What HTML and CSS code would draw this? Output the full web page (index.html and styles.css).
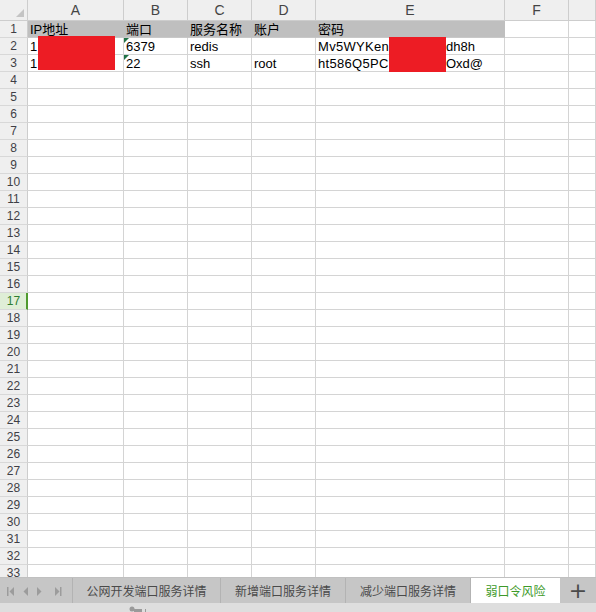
FILE: index.html
```html
<!DOCTYPE html>
<html lang="zh">
<head>
<meta charset="utf-8">
<link rel="stylesheet" href="styles.css">
</head>
<body>
<div class="app">
  <div class="sheet">
    <div class="row head">
      <div class="rh corner"><span class="tri"></span></div>
      <div class="c a">A</div><div class="c b">B</div><div class="c cc">C</div><div class="c d">D</div><div class="c e">E</div><div class="c f">F</div><div class="c g"></div>
    </div>
    <div class="row r1">
      <div class="rh">1</div>
      <div class="c a gray">IP地址</div><div class="c b gray">端口</div><div class="c cc gray">服务名称</div><div class="c d gray">账户</div><div class="c e gray">密码</div><div class="c f"></div><div class="c g"></div>
    </div>
    <div class="row">
      <div class="rh">2</div>
      <div class="c a">1</div><div class="c b flag">6379</div><div class="c cc">redis</div><div class="c d"></div><div class="c e"><span class="lead">Mv5WYKenc</span><span>dh8h</span></div><div class="c f"></div><div class="c g"></div>
    </div>
    <div class="row">
      <div class="rh">3</div>
      <div class="c a">1</div><div class="c b flag">22</div><div class="c cc">ssh</div><div class="c d">root</div><div class="c e"><span class="lead">ht586Q5PCB</span><span>Oxd@</span></div><div class="c f"></div><div class="c g"></div>
    </div>
    <div class="row"><div class="rh">4</div><div class="c a"></div><div class="c b"></div><div class="c cc"></div><div class="c d"></div><div class="c e"></div><div class="c f"></div><div class="c g"></div></div>
    <div class="row"><div class="rh">5</div><div class="c a"></div><div class="c b"></div><div class="c cc"></div><div class="c d"></div><div class="c e"></div><div class="c f"></div><div class="c g"></div></div>
    <div class="row"><div class="rh">6</div><div class="c a"></div><div class="c b"></div><div class="c cc"></div><div class="c d"></div><div class="c e"></div><div class="c f"></div><div class="c g"></div></div>
    <div class="row"><div class="rh">7</div><div class="c a"></div><div class="c b"></div><div class="c cc"></div><div class="c d"></div><div class="c e"></div><div class="c f"></div><div class="c g"></div></div>
    <div class="row"><div class="rh">8</div><div class="c a"></div><div class="c b"></div><div class="c cc"></div><div class="c d"></div><div class="c e"></div><div class="c f"></div><div class="c g"></div></div>
    <div class="row"><div class="rh">9</div><div class="c a"></div><div class="c b"></div><div class="c cc"></div><div class="c d"></div><div class="c e"></div><div class="c f"></div><div class="c g"></div></div>
    <div class="row"><div class="rh">10</div><div class="c a"></div><div class="c b"></div><div class="c cc"></div><div class="c d"></div><div class="c e"></div><div class="c f"></div><div class="c g"></div></div>
    <div class="row"><div class="rh">11</div><div class="c a"></div><div class="c b"></div><div class="c cc"></div><div class="c d"></div><div class="c e"></div><div class="c f"></div><div class="c g"></div></div>
    <div class="row"><div class="rh">12</div><div class="c a"></div><div class="c b"></div><div class="c cc"></div><div class="c d"></div><div class="c e"></div><div class="c f"></div><div class="c g"></div></div>
    <div class="row"><div class="rh">13</div><div class="c a"></div><div class="c b"></div><div class="c cc"></div><div class="c d"></div><div class="c e"></div><div class="c f"></div><div class="c g"></div></div>
    <div class="row"><div class="rh">14</div><div class="c a"></div><div class="c b"></div><div class="c cc"></div><div class="c d"></div><div class="c e"></div><div class="c f"></div><div class="c g"></div></div>
    <div class="row"><div class="rh">15</div><div class="c a"></div><div class="c b"></div><div class="c cc"></div><div class="c d"></div><div class="c e"></div><div class="c f"></div><div class="c g"></div></div>
    <div class="row"><div class="rh">16</div><div class="c a"></div><div class="c b"></div><div class="c cc"></div><div class="c d"></div><div class="c e"></div><div class="c f"></div><div class="c g"></div></div>
    <div class="row"><div class="rh sel">17</div><div class="c a"></div><div class="c b"></div><div class="c cc"></div><div class="c d"></div><div class="c e"></div><div class="c f"></div><div class="c g"></div></div>
    <div class="row"><div class="rh">18</div><div class="c a"></div><div class="c b"></div><div class="c cc"></div><div class="c d"></div><div class="c e"></div><div class="c f"></div><div class="c g"></div></div>
    <div class="row"><div class="rh">19</div><div class="c a"></div><div class="c b"></div><div class="c cc"></div><div class="c d"></div><div class="c e"></div><div class="c f"></div><div class="c g"></div></div>
    <div class="row"><div class="rh">20</div><div class="c a"></div><div class="c b"></div><div class="c cc"></div><div class="c d"></div><div class="c e"></div><div class="c f"></div><div class="c g"></div></div>
    <div class="row"><div class="rh">21</div><div class="c a"></div><div class="c b"></div><div class="c cc"></div><div class="c d"></div><div class="c e"></div><div class="c f"></div><div class="c g"></div></div>
    <div class="row"><div class="rh">22</div><div class="c a"></div><div class="c b"></div><div class="c cc"></div><div class="c d"></div><div class="c e"></div><div class="c f"></div><div class="c g"></div></div>
    <div class="row"><div class="rh">23</div><div class="c a"></div><div class="c b"></div><div class="c cc"></div><div class="c d"></div><div class="c e"></div><div class="c f"></div><div class="c g"></div></div>
    <div class="row"><div class="rh">24</div><div class="c a"></div><div class="c b"></div><div class="c cc"></div><div class="c d"></div><div class="c e"></div><div class="c f"></div><div class="c g"></div></div>
    <div class="row"><div class="rh">25</div><div class="c a"></div><div class="c b"></div><div class="c cc"></div><div class="c d"></div><div class="c e"></div><div class="c f"></div><div class="c g"></div></div>
    <div class="row"><div class="rh">26</div><div class="c a"></div><div class="c b"></div><div class="c cc"></div><div class="c d"></div><div class="c e"></div><div class="c f"></div><div class="c g"></div></div>
    <div class="row"><div class="rh">27</div><div class="c a"></div><div class="c b"></div><div class="c cc"></div><div class="c d"></div><div class="c e"></div><div class="c f"></div><div class="c g"></div></div>
    <div class="row"><div class="rh">28</div><div class="c a"></div><div class="c b"></div><div class="c cc"></div><div class="c d"></div><div class="c e"></div><div class="c f"></div><div class="c g"></div></div>
    <div class="row"><div class="rh">29</div><div class="c a"></div><div class="c b"></div><div class="c cc"></div><div class="c d"></div><div class="c e"></div><div class="c f"></div><div class="c g"></div></div>
    <div class="row"><div class="rh">30</div><div class="c a"></div><div class="c b"></div><div class="c cc"></div><div class="c d"></div><div class="c e"></div><div class="c f"></div><div class="c g"></div></div>
    <div class="row"><div class="rh">31</div><div class="c a"></div><div class="c b"></div><div class="c cc"></div><div class="c d"></div><div class="c e"></div><div class="c f"></div><div class="c g"></div></div>
    <div class="row"><div class="rh">32</div><div class="c a"></div><div class="c b"></div><div class="c cc"></div><div class="c d"></div><div class="c e"></div><div class="c f"></div><div class="c g"></div></div>
    <div class="row"><div class="rh">33</div><div class="c a"></div><div class="c b"></div><div class="c cc"></div><div class="c d"></div><div class="c e"></div><div class="c f"></div><div class="c g"></div></div>
    <div class="mask mask-a"></div>
    <div class="mask mask-e"></div>
  </div>
  <div class="tabs">
    <div class="nav">
      <svg width="72" height="26" viewBox="0 0 72 26">
        <g fill="#9c9c9c">
          <rect x="7" y="9" width="1.5" height="9"/>
          <polygon points="14,9 14,18 9.5,13.5"/>
          <polygon points="28,9 28,18 23.5,13.5"/>
          <polygon points="37,9 37,18 41.5,13.5"/>
          <polygon points="55,9 55,18 59.5,13.5"/>
          <rect x="60" y="9" width="1.5" height="9"/>
        </g>
      </svg>
    </div>
    <div class="tab t1">公网开发端口服务详情</div>
    <div class="tab t2">新增端口服务详情</div>
    <div class="tab t3">减少端口服务详情</div>
    <div class="tab active">弱口令风险</div>
    <div class="plus">+</div>
  </div>
  <div class="status">
    <svg class="grip" width="20" height="9" viewBox="0 0 20 9">
      <circle cx="4" cy="4" r="2.5" fill="#9a9a9a"/>
      <rect x="6" y="4" width="8" height="3" fill="#9a9a9a"/>
      <rect x="17" y="4" width="1" height="5" fill="#9a9a9a"/>
    </svg>
  </div>
</div>
</body>
</html>
```

FILE: styles.css
```css
* { box-sizing: border-box; }
html, body { margin: 0; padding: 0; }
body {
  width: 596px;
  height: 612px;
  overflow: hidden;
  background: #ffffff;
  font-family: "Liberation Sans", "Noto Sans CJK SC", sans-serif;
  font-size: 13px;
  color: #000;
}
.app { display: flex; flex-direction: column; height: 612px; }
.sheet { height: 577px; overflow: hidden; flex: none; position: relative; }
.row { display: flex; height: 17px; }
.row.head { height: 21px; background: #efefef; }
.rh {
  flex: none;
  width: 28px;
  background: #efefef;
  border-right: 1px solid #cdcdcd;
  border-bottom: 1px solid #d8d8d8;
  color: #3f3f46;
  font-size: 12px;
  text-align: center;
  line-height: 16px;
}
.rh.sel {
  background: #dfeed7;
  color: #2f7d32;
  border-right: 2px solid #4f9a2e;
  padding-left: 1px;
}
.corner { position: relative; border-bottom: 1px solid #cdcdcd; }
.tri {
  position: absolute;
  right: 3px;
  bottom: 3px;
  width: 0;
  height: 0;
  border-left: 8px solid transparent;
  border-bottom: 8px solid #c4c4c4;
}
.c {
  flex: none;
  height: 17px;
  border-right: 1px solid #d4d4d4;
  border-bottom: 1px solid #d4d4d4;
  padding-left: 2px;
  line-height: 17px;
  white-space: nowrap;
  position: relative;
}
.head .c {
  height: 21px;
  line-height: 21px;
  text-align: center;
  padding: 0;
  font-size: 14px;
  color: #444;
  border-right-color: #cdcdcd;
  border-bottom-color: #cdcdcd;
}
.a { width: 96px; }
.b { width: 64px; }
.cc { width: 64px; }
.d { width: 64px; }
.e { width: 189px; }
.f { width: 64px; }
.g { flex: 1; }
.gray { background: #bfbfbf; border-right-color: #bfbfbf; border-bottom-color: #c8c8c8; }
.lead {
  display: inline-block;
  width: 128px;
  overflow: hidden;
  vertical-align: top;
  letter-spacing: 0.3px;
}
.flag::before {
  content: "";
  position: absolute;
  left: 0;
  top: 0;
  width: 0;
  height: 0;
  border-top: 5px solid #217346;
  border-right: 5px solid transparent;
}
.mask { position: absolute; background: #ed1c24; z-index: 2; }
.mask-a { left: 38px; top: 36px; width: 77px; height: 34px; }
.mask-e { left: 389px; top: 37px; width: 57px; height: 35px; }
.tabs {
  flex: none;
  height: 26px;
  display: flex;
  background: #c6c6c6;
  border-top: 1px solid #c0c0c0;
}
.nav { width: 73px; flex: none; border-right: 1px solid #b3b3b3; }
.nav svg { display: block; }
.tab {
  flex: none;
  height: 100%;
  display: flex;
  align-items: center;
  justify-content: center;
  font-size: 12px;
  color: #4a4a4a;
  border-right: 1px solid #b3b3b3;
  font-family: "Noto Sans CJK SC", sans-serif;
}
.t1 { width: 148px; }
.t2 { width: 125px; }
.t3 { width: 125px; }
.tab.active { width: 89px; background: #ffffff; color: #3d9a2a; border-right: none; }
.plus {
  flex: 1;
  display: flex;
  align-items: center;
  justify-content: center;
  font-size: 22px;
  color: #4a4a4a;
  font-family: "DejaVu Sans", sans-serif;
}
.status { flex: 1; background: #dedede; position: relative; }
.grip { position: absolute; left: 128px; top: 2px; }
```
